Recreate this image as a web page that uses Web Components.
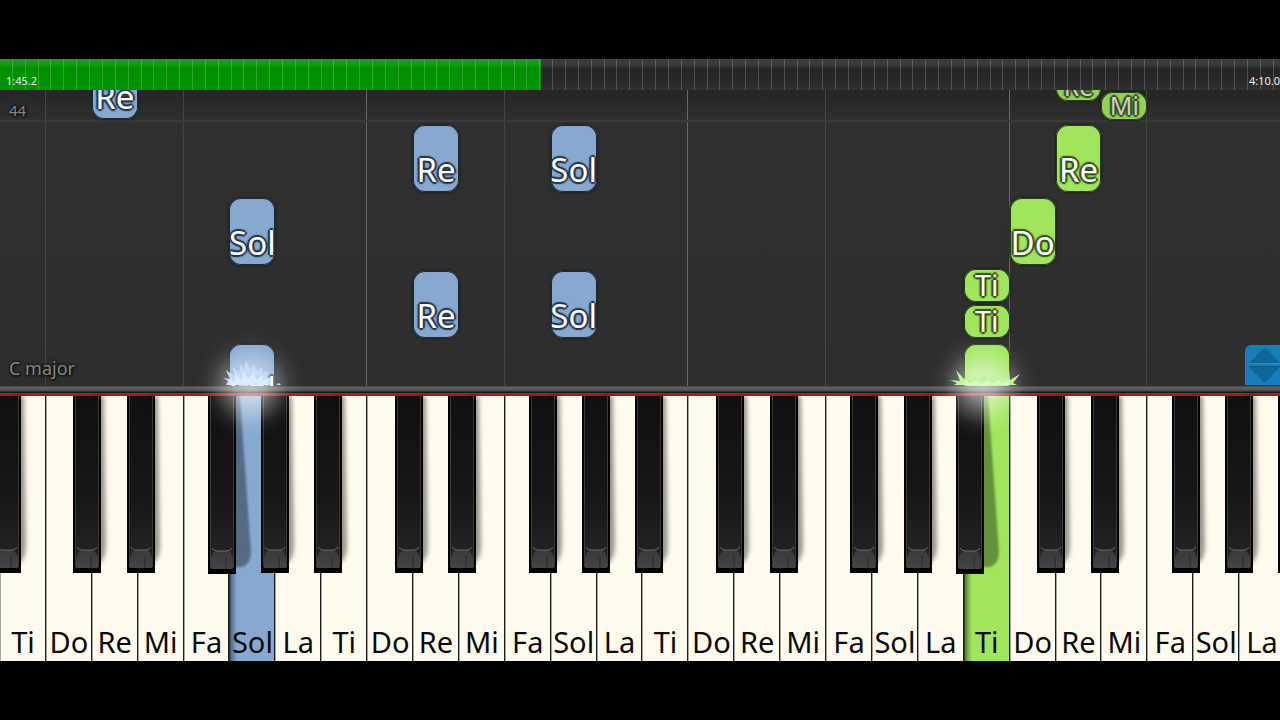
<!DOCTYPE html>
<html lang="en">
<head>
<meta charset="utf-8">
<meta name="viewport" content="width=device-width, initial-scale=1">
<title>Piano tutorial</title>
<style>
  html { background: #000; }
  body { margin: 0; font-family: "Noto Sans", "Open Sans", sans-serif; }
</style>
</head>
<body>
<piano-player></piano-player>

<script>
const KEY_COUNT = 28;
const NAMES = ["Ti", "Do", "Re", "Mi", "Fa", "Sol", "La"];

class BaseElement extends HTMLElement {
  connectedCallback() {
    if (this.shadowRoot) return;
    this.attachShadow({ mode: "open" }).innerHTML = this.render();
  }
}

/* Song position bar with elapsed and total time */
customElements.define("song-progress", class extends BaseElement {
  render() {
    return `
    <style>
      :host { display: grid; height: 31px; overflow: hidden; color: #eee; font-size: 11px; line-height: 14px; }
      progress, .ticks, .times { grid-area: 1 / 1; }
      progress { appearance: none; display: block; width: 100%; height: 100%; border: 0; background: none; }
      progress::-webkit-progress-bar { background: linear-gradient(#3e3e3e, #383838 20%, #262626 32%, #262626 65%, #303030); }
      progress::-webkit-progress-value { background: linear-gradient(#1c9c1f, #119a14 20%, #008f00 28%, #009600); }
      .ticks { background: repeating-linear-gradient(90deg, transparent 0, transparent calc(100% / 99.5 - 1px), rgba(255,255,255,.19) calc(100% / 99.5 - 1px), rgba(255,255,255,.19) calc(100% / 99.5)); }
      .times { display: flex; justify-content: space-between; align-items: flex-end; padding-left: 6px; z-index: 1; padding-bottom: 2px; }
      .total { flex: none; width: 31px; white-space: nowrap; }
    </style>
    <progress max="1000" value="423" aria-label="Song position"></progress>
    <div class="ticks"></div>
    <div class="times"><span>1:45.2</span><span class="total">4:10.0</span></div>`;
  }
});

/* One falling note */
customElements.define("fall-note", class extends BaseElement {
  render() {
    const key = Number(this.getAttribute("key"));
    const top = this.getAttribute("top");
    const size = this.getAttribute("size") || "long";
    const height = { long: 67, short: 33, brief: 28 }[size];
    const hand = this.getAttribute("hand");
    const fill = hand === "left" ? "#87a9d0" : size === "brief" ? "#93d257" : "#a0e55c";
    const edge = hand === "left" ? "#1c2838" : "#263c16";
    const halo = hand === "left" ? "#26364b" : "#33501f";
    return `
    <style>
      :host { position: absolute; top: ${top}px; left: calc(${key} * 100% / ${KEY_COUNT}); width: calc(100% / ${KEY_COUNT});
        height: ${height}px; box-sizing: border-box; border-radius: 12px; background: ${fill}; color: #fff;
        box-shadow: inset 0 0 0 1px ${edge}, 0 0 2px 1px #222; overflow: ${size === "long" ? "hidden" : "visible"};
        display: flex; align-items: flex-end; justify-content: center; }
      span { text-shadow: 1px 0 1px ${halo}, -1px 0 1px ${halo}, 0 1px 1px ${halo}, 0 -1px 1px ${halo},
        2px 0 1px ${halo}, -2px 0 1px ${halo}, 0 2px 1px ${halo}, 0 -2px 1px ${halo}, 0 0 3px ${halo}, 0 0 3px ${halo}; }
      .long { font-size: 33px; line-height: 36px; padding-bottom: 4px; }
      .short { font-size: 29px; line-height: 32px; padding-bottom: 1px; }
      .brief { font-size: 25px; line-height: 28px; padding-bottom: 1px; color: #ccc; }
    </style>
    <span class="${size}"><slot></slot></span>`;
  }
});

/* Glow and grass-like sparks where a note meets its key */
customElements.define("hit-spark", class extends BaseElement {
  render() {
    const key = Number(this.getAttribute("key"));
    const left = this.getAttribute("hand") === "left";
    const blades = left
      ? `<path fill="#c4dcf6" d="M34 59 L36 55 L31 52 L38 53 L34 44 L42 50 L41 41 L47 47 L49 38 L52 44 L54 35 L58 44 L62 38 L64 46 L70 41 L70 47 L76 45 L75 51 L79 52 L78 59Z"/>
         <path fill="#e6f1ff" opacity=".7" d="M36 59 L38 52 L43 56 L43 48 L49 54 L52 45 L56 53 L62 46 L64 54 L71 49 L71 55 L76 52 L77 59Z"/>
         <path fill="#c4dcf6" d="M84 59 L87 57 L89 59Z"/>`
      : `<path fill="#c0f598" d="M27 59 L30 57 L23 54 L33 55 L29 44 L37 53 L40 50 L45 54 L48 50 L51 54 L57 49 L61 54 L67 49 L70 53 L74 49 L79 53 L82 44 L83 54 L93 48 L86 57 L90 59Z"/>
         <path fill="#e4ffd0" opacity=".7" d="M36 59 L39 55 L44 57 L49 54 L54 57 L60 54 L66 57 L72 54 L76 57 L82 54 L83 59Z"/>`;
    return `
    <style>
      :host { position: absolute; top: 236px; left: calc(${key} * 100% / ${KEY_COUNT}); width: calc(100% / ${KEY_COUNT});
        display: flex; justify-content: center; z-index: 4; pointer-events: none; }
      svg { flex: none; display: block; width: 120px; height: 120px; }
    </style>
    <svg viewBox="0 0 120 120" aria-hidden="true">
      <defs><radialGradient id="g">
        <stop offset="0" stop-color="#fff" stop-opacity=".62"/>
        <stop offset=".25" stop-color="#fff" stop-opacity=".5"/>
        <stop offset=".5" stop-color="#fff" stop-opacity=".25"/>
        <stop offset=".7" stop-color="#fff" stop-opacity=".08"/>
        <stop offset=".85" stop-color="#fff" stop-opacity=".02"/>
        <stop offset="1" stop-color="#fff" stop-opacity="0"/>
      </radialGradient></defs>
      <circle cx="${left ? 58 : 56}" cy="60" r="56" fill="url(#g)"/>
      ${blades}
    </svg>`;
  }
});

/* The dark lane area with the falling notes */
customElements.define("note-roll", class extends BaseElement {
  render() {
    const lines = [1, 4, 8, 11, 15, 18, 22, 25].map(k =>
      `<i style="--k:${k}" class="${[8, 15, 22].includes(k) ? "strong" : ""}"></i>`).join("");
    return `
    <style>
      :host { display: block; position: relative; height: 296px; color: #858585; }
      .view { position: relative; height: 100%; overflow: hidden;
        background: linear-gradient(#252525, #303030 30px, #2e2e2e); }
      .lane { position: absolute; top: 0; left: 0; width: calc(100% * 1285 / 1280); height: 100%; }
      i { position: absolute; top: 0; bottom: 0; left: calc(var(--k) * 100% / ${KEY_COUNT} - 1px); width: 1px; background: #444; }
      i.strong { background: #666; }
      .bar { position: absolute; top: 30px; left: 0; right: 0; height: 2px; background: #3a3a3a; }
      .info { position: absolute; inset: 0; padding: 9px 9px 6px; display: flex; flex-direction: column;
        justify-content: space-between; text-shadow: 0 0 3px #111, 0 0 3px #111, 1px 1px 2px #111; }
      .measure { font-size: 15px; line-height: 22px; }
      .scale { font-size: 18px; line-height: 24px; }
      button { position: absolute; right: 0; bottom: 1px; width: 35px; height: 40px; padding: 0; border: 0;
        border-radius: 6px 0 0 0; background: #147fb8; overflow: hidden; }
      button svg { display: block; width: 35px; height: 40px; }
    </style>
    <div class="view">
      <div class="lane">${lines}</div>
      <div class="bar"></div>
      <div class="info"><span class="measure">44</span><span class="scale">C major</span></div>
      <div class="lane"><slot></slot></div>
      <button type="button" aria-label="Resize keyboard">
        <svg viewBox="0 0 35 40" aria-hidden="true">
          <path fill="#0e669b" d="M20 2 L35 18 H4Z M4 22 H35 L20 38Z"/>
          <path fill="none" stroke="#2590c8" d="M4 18.5 H35"/><path fill="none" stroke="#0b5787" d="M4 21.5 H35"/>
        </svg>
      </button>
    </div>
    <div class="lane"><slot name="spark"></slot></div>`;
  }
});

/* A white key, with the black key that lies over its right edge */
customElements.define("piano-key", class extends BaseElement {
  render() {
    const sharp = { Do: 60, Re: 77, Fa: 53, Sol: 69, La: 84 }[this.getAttribute("note")];
    const before = this.hasAttribute("edge");
    const cast = this.hasAttribute("cast");
    const down = this.getAttribute("down");
    const face = { left: "#87a9d0", right: "#a0e55c" }[down] || "#fefbee";
    const black = pos => `
      <button type="button" class="black" style="left:${pos}%" aria-label="Sharp">
        <svg viewBox="0 0 28 178" preserveAspectRatio="none" aria-hidden="true">
          <defs>
            <linearGradient id="b" x2="0" y2="1"><stop offset="0" stop-color="#101010"/><stop offset=".6" stop-color="#171717"/><stop offset="1" stop-color="#262626"/></linearGradient>
            <linearGradient id="c" x2="0" y2="1"><stop offset="0" stop-color="#3a3a3a"/><stop offset="1" stop-color="#444"/></linearGradient>
            <filter id="s" x="-50%" width="200%"><feGaussianBlur stdDeviation="${cast ? 1 : 2}"/></filter>
          </defs>
          ${cast
            ? `<path filter="url(#s)" fill="#000" fill-opacity=".37" d="M20 0 H32 L43 156 Q43 168 34 171 H20Z"/>`
            : `<path filter="url(#s)" fill="#000" fill-opacity=".4" d="M20 0 H31 L33 150 Q33 164 26 168 H20Z"/>`}
          <path fill="#000" d="M0 0 H28 V178 H0Z"/>
          <path fill="url(#b)" d="M3 0 H25 V172 H3Z"/>
          <path fill="none" stroke="#3c3c3c" d="M2.5 0 V172 M25.5 0 V172"/>
          <path fill="url(#c)" d="M3 173 V164 Q4 156 8 155 H20 Q24 156 25 164 V173Z"/>
          <path fill="none" stroke="#6c6c6c" d="M4 152 Q6 155 9 155 H19 Q22 155 24 152"/>
          <path fill="none" stroke="#2a2a2a" d="M18 161 V173"/>
        </svg>
      </button>`;
    return `
    <style>
      :host { display: block; position: relative; min-width: 0; }
      button { font: inherit; border: 0; padding: 0; margin: 0; }
      .white { display: flex; align-items: flex-end; justify-content: center; width: 100%; height: 100%;
        padding-bottom: 1px; box-sizing: border-box; color: #0a0a0a; font-size: 29px; line-height: 36px;
        white-space: nowrap; background: ${down
          ? `linear-gradient(90deg, rgba(0,0,0,.6), rgba(0,0,0,.3) 3px, transparent 8px), ${face}` : face};
        box-shadow: inset -1px 0 #1b1b1b, inset 1px 0 rgba(0,0,0,.35); }
      .black { position: absolute; top: 0; width: 61%; height: ${cast ? 178 : 177}px; background: none; z-index: 2; }
      .black svg { display: block; width: 100%; height: 100%; overflow: visible; }
    </style>
    <button type="button" class="white"><slot></slot></button>
    ${before ? black(-16) : ""}${sharp ? black(sharp) : ""}`;
  }
});

customElements.define("piano-keyboard", class extends BaseElement {
  render() {
    let keys = "";
    for (let k = 0; k < KEY_COUNT; k++) {
      const name = NAMES[k % 7];
      const down = { 5: "left", 21: "right" }[k];
      keys += `<piano-key note="${name}"${k === 0 ? " edge" : ""}${down ? ` down="${down}"` : ""}${k === 4 || k === 20 ? " cast" : ""}>${name}</piano-key>`;
    }
    return `
    <style>
      :host { display: block; overflow: hidden; }
      .rail { height: 10px; background: linear-gradient(#383838 0, #606060 1px, #5c5c5c 3px, #484848 5px, #171717 6px, #171717 7px, #b02222 7px, #9b1c1c 10px); }
      .keys { display: grid; grid-template-columns: repeat(${KEY_COUNT}, 1fr); width: calc(100% * 1285 / 1280); height: 265px; }
    </style>
    <div class="rail"></div>
    <div class="keys">${keys}</div>`;
  }
});

customElements.define("piano-player", class extends BaseElement {
  render() {
    const notes = [
      [2, "left", -38, "long", "Re"], [9, "left", 35, "long", "Re"], [12, "left", 35, "long", "Sol"],
      [5, "left", 108, "long", "Sol"], [9, "left", 181, "long", "Re"], [12, "left", 181, "long", "Sol"],
      [5, "left", 254, "long", "Sol"],
      [23, "right", -17, "brief", "Re"], [24, "right", 2, "brief", "Mi"], [23, "right", 35, "long", "Re"],
      [22, "right", 108, "long", "Do"], [21, "right", 179, "short", "Ti"], [21, "right", 215, "short", "Ti"],
      [21, "right", 254, "long", ""]
    ].map(([k, hand, top, size, text]) =>
      `<fall-note key="${k}" hand="${hand}" top="${top}" size="${size}">${text}</fall-note>`).join("");
    return `
    <style>
      :host { display: flex; flex-direction: column; justify-content: center; min-height: 100vh; overflow: hidden; background: #000; }
    </style>
    <song-progress></song-progress>
    <note-roll>${notes}
      <hit-spark slot="spark" key="5" hand="left"></hit-spark>
      <hit-spark slot="spark" key="21" hand="right"></hit-spark>
    </note-roll>
    <piano-keyboard></piano-keyboard>`;
  }
});
</script>
</body>
</html>
